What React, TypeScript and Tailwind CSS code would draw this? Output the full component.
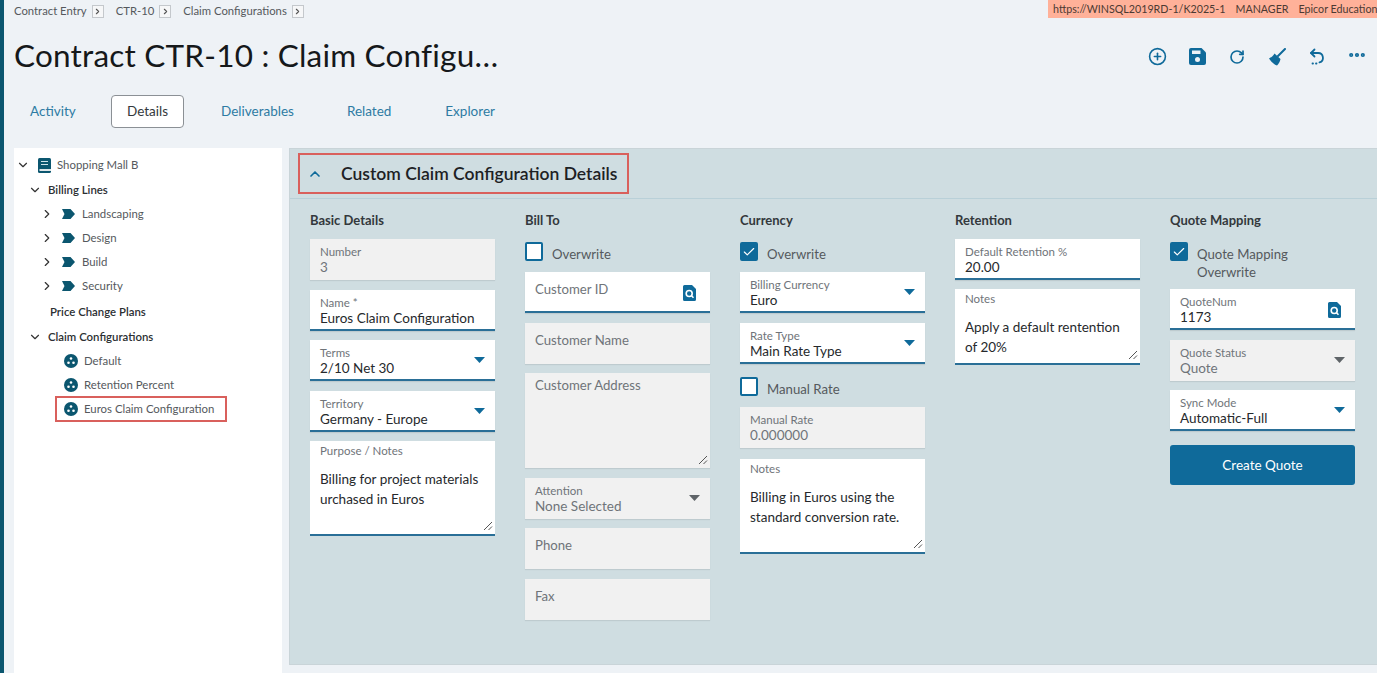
import { CirclePlus, RotateCw, Ellipsis, ChevronDown, ChevronRight, ChevronUp, Check } from "lucide-react"
import type { ReactNode } from "react"

const Caret = ({ muted }: { muted?: boolean }) => (
  <svg width="11" height="6" viewBox="0 0 11 6" className="absolute right-[10px] top-[17px]">
    <path d="M0 0h11L5.500 6z" fill={muted ? "#5f6468" : "#0f6a9a"} />
  </svg>
)

const Lookup = () => (
  <svg width="13" height="16" viewBox="0 0 13 16" className="absolute right-[14px] top-[13px]">
    <path d="M1.500 0H9l4 4v10.500a1.500 1.500 0 0 1-1.500 1.500h-10A1.500 1.500 0 0 1 0 14.500v-13A1.500 1.500 0 0 1 1.500 0z" fill="#0f6a9a" />
    <circle cx="6.200" cy="8.500" r="3" fill="none" stroke="#fff" strokeWidth="1.600" />
    <path d="M8.500 10.800l2 2" stroke="#fff" strokeWidth="1.600" />
  </svg>
)

const Grip = () => (
  <svg width="10" height="10" viewBox="0 0 10 10" className="absolute bottom-[3px] right-[2px]">
    <path d="M1 9l8-8M5.500 9l3.500-3.500" stroke="#555" strokeWidth="1" />
  </svg>
)

const SaveIcon = () => (
  <svg width="17" height="17" viewBox="0 0 17 17">
    <path d="M2 0h10.500L17 4.500V15a2 2 0 0 1-2 2H2a2 2 0 0 1-2-2V2a2 2 0 0 1 2-2z" fill="currentColor" />
    <rect x="3" y="2.500" width="8.500" height="3.500" fill="#eef2f6" />
    <circle cx="8.500" cy="11.500" r="2.500" fill="#eef2f6" />
  </svg>
)

const BroomIcon = () => (
  <svg width="18" height="18" viewBox="0 0 18 18">
    <path d="M17 1l-7 7" stroke="currentColor" strokeWidth="2" strokeLinecap="round" />
    <path d="M6.500 5.500L12.500 11C12 14 10.500 16 9 17.500 6 16.500 2.500 13 1 10.500 3 9.500 5 8 6.500 5.500z" fill="currentColor" />
  </svg>
)

const UndoIcon = () => (
  <svg width="18" height="18" viewBox="0 0 18 18" fill="none" stroke="currentColor" strokeWidth="1.800" strokeLinecap="round" strokeLinejoin="round">
    <path d="M6.500 1.500L3 5l3.500 3.500" />
    <path d="M3 5h7a4.800 4.800 0 0 1 1.500 9.400" />
    <path d="M8.500 15.500h-.5M5 15.500h-.5" />
  </svg>
)

const BookIcon = () => (
  <svg width="13" height="15" viewBox="0 0 13 15" className="ml-[8px] shrink-0">
    <rect x="0" y="0" width="13" height="15" rx="1.500" fill="#0b566f" />
    <path d="M3 3.500h7M3 6.500h7" stroke="#cfe3ea" strokeWidth="1.200" />
    <rect x="1.500" y="11" width="11.500" height="2" fill="#dfe6e9" />
  </svg>
)

type FieldProps = {
  label: string
  value?: string
  disabled?: boolean
  caret?: boolean
  lookup?: boolean
}

const Field = ({ label, value, disabled, caret, lookup }: FieldProps) => (
  <div
    className={`relative h-[41px] w-[185px] pl-[10px] pt-[5px] shadow-[0_1px_1px_rgba(0,0,0,0.08)] ${
      disabled ? "bg-[#f1f1f1]" : "border-b-2 border-[#2a6f97] bg-white"
    }`}
  >
    {value ? (
      <>
        <div className="text-[11.500px] leading-[15px] text-[#6f7479]">{label}</div>
        <div className={`text-[13.500px] leading-[17px] ${disabled ? "text-[#6f7479]" : "text-[#26292c]"}`}>{value}</div>
      </>
    ) : (
      <div className="pt-[3px] text-[13.200px] leading-[18px] text-[#6f7479]">{label}</div>
    )}
    {caret && <Caret muted={disabled} />}
    {lookup && <Lookup />}
  </div>
)

const Area = ({ label, lines, h, disabled, big }: { label: string; lines?: string[]; h: string; disabled?: boolean; big?: boolean }) => (
  <div
    className={`relative w-[185px] pl-[10px] ${h} ${
      disabled ? "bg-[#f1f1f1] pt-[3px] shadow-[0_1px_1px_rgba(0,0,0,0.08)]" : "border-b-2 border-[#2a6f97] bg-white pt-[2px]"
    }`}
  >
    <div className={big ? "text-[13.200px] leading-[18px] text-[#6f7479]" : "text-[11.500px] leading-[15px] text-[#6f7479]"}>{label}</div>
    {lines && (
      <div className="mt-[11px] text-[13.500px] leading-[20px] text-[#26292c]">
        {lines.map((l) => (
          <div key={l} className="whitespace-nowrap">{l}</div>
        ))}
      </div>
    )}
    <Grip />
  </div>
)

const Checkbox = ({ checked, label }: { checked?: boolean; label: ReactNode }) => (
  <div className="flex items-start gap-[9px] pt-[13px] text-[13.200px] leading-[18px] text-[#55595d]">
    <div
      className={`flex h-[19px] w-[18px] shrink-0 items-center justify-center rounded-[2px] border-2 border-[#0f6a9a] ${
        checked ? "bg-[#0f6a9a]" : "bg-white"
      }`}
    >
      {checked && <Check size={14} color="#fff" strokeWidth={2} />}
    </div>
    <div className="-mb-[2px] pt-[3px]">{label}</div>
  </div>
)

const Heading = ({ children }: { children: ReactNode }) => (
  <div className="h-[18px] text-[13px] font-bold leading-[18px] text-[#33383c]">{children}</div>
)

const Column = ({ title, children }: { title: string; children: ReactNode }) => (
  <div className="flex w-[185px] flex-col">
    <Heading>{title}</Heading>
    {children}
  </div>
)

const Crumb = ({ label }: { label: string }) => (
  <div className="flex items-center gap-[5px]">
    <span>{label}</span>
    <span className="flex h-[13px] w-[12px] items-center justify-center border border-[#c4c8cc] bg-[#f6f7f8]">
      <ChevronRight size={9} strokeWidth={3} color="#555" />
    </span>
  </div>
)

const Tag = () => (
  <svg width="13" height="10" viewBox="0 0 13 10" className="shrink-0">
    <path d="M0 0h8.500L13 5l-4.500 5H0l2.500-5z" fill="#0b566f" />
  </svg>
)

const Dots = () => (
  <svg width="14" height="14" viewBox="0 0 14 14" className="shrink-0">
    <circle cx="7" cy="7" r="7" fill="#0b566f" />
    <circle cx="7" cy="4.500" r="1.300" fill="#fff" />
    <circle cx="4.500" cy="8.800" r="1.300" fill="#fff" />
    <circle cx="9.500" cy="8.800" r="1.300" fill="#fff" />
  </svg>
)

const TreeRow = ({ children, className }: { children: ReactNode; className?: string }) => (
  <div className={`flex h-[24px] items-center whitespace-nowrap text-[11.400px] ${className ?? ""}`}>{children}</div>
)

const Tree = () => (
  <div className="h-full w-[268px] bg-white pl-[2px] pt-[5px] text-[#55595d]">
    <TreeRow>
      <ChevronDown size={14} color="#333" />
      <BookIcon />
      <span className="ml-[6px]">Shopping Mall B</span>
    </TreeRow>
    <TreeRow className="mt-[1px] pl-[12px] font-semibold text-[#2c3033]">
      <ChevronDown size={14} color="#333" />
      <span className="ml-[6px]">Billing Lines</span>
    </TreeRow>
    {["Landscaping", "Design", "Build", "Security"].map((n) => (
      <TreeRow key={n} className="pl-[24px]">
        <ChevronRight size={14} color="#333" />
        <span className="ml-[8px]"><Tag /></span>
        <span className="ml-[7px]">{n}</span>
      </TreeRow>
    ))}
    <TreeRow className="mt-[1px] h-[26px] pl-[34px] font-semibold text-[#2c3033]">Price Change Plans</TreeRow>
    <TreeRow className="pl-[12px] font-semibold text-[#2c3033]">
      <ChevronDown size={14} color="#333" />
      <span className="ml-[6px]">Claim Configurations</span>
    </TreeRow>
    {["Default", "Retention Percent"].map((n) => (
      <TreeRow key={n} className="pl-[48px]">
        <Dots />
        <span className="ml-[6px]">{n}</span>
      </TreeRow>
    ))}
    <TreeRow className="-mt-[1px] ml-[39px] h-[26px] w-[172px] border-2 border-[#d9605c] pl-[7px]">
      <Dots />
      <span className="ml-[6px]">Euros Claim Configuration</span>
    </TreeRow>
  </div>
)

const ToolIcon = ({ children }: { children: ReactNode }) => (
  <div className="flex w-[40px] items-center justify-center">{children}</div>
)

export default function App() {
  return (
    <div className="flex h-[673px] w-[1377px] overflow-hidden bg-[#eef2f6] font-['Lato','Noto_Sans',sans-serif]">
      <div className="w-[4px] shrink-0 bg-[#0b566f]" />
      <div className="flex min-w-0 flex-1 flex-col">
        <div className="flex h-[18px] justify-between">
          <div className="flex items-center gap-[12px] pl-[10px] pt-[4px] text-[11.300px] text-[#55595d]">
            <Crumb label="Contract Entry" />
            <Crumb label="CTR-10" />
            <Crumb label="Claim Configurations" />
          </div>
          <div className="flex w-[329px] items-center gap-[10px] whitespace-nowrap bg-[#ffb199] pl-[5px] text-[10.700px] text-[#4b3a33]">
            <span>https://WINSQL2019RD-1/K2025-1</span>
            <span>MANAGER</span>
            <span>Epicor Education</span>
          </div>
        </div>

        <div className="flex h-[77px] items-center justify-between pl-[10px]">
          <h1 className="pb-[3px] text-[31.500px] leading-[40px] tracking-[0.2px] text-[#15181a]">Contract CTR-10 : Claim Configu…</h1>
          <div className="flex items-center text-[#0f6a9a]">
            <ToolIcon><CirclePlus size={19} /></ToolIcon>
            <ToolIcon><SaveIcon /></ToolIcon>
            <ToolIcon><RotateCw size={16} strokeWidth={2.500} /></ToolIcon>
            <ToolIcon><BroomIcon /></ToolIcon>
            <ToolIcon><UndoIcon /></ToolIcon>
            <ToolIcon><Ellipsis size={20} strokeWidth={3} className="mb-[4px]" /></ToolIcon>
          </div>
        </div>

        <div className="flex h-[33px] items-center pl-[10px] text-[13.500px] text-[#2d7ba3]">
          <span className="w-[97px] pl-[16px]">Activity</span>
          <span className="flex h-[33px] w-[73px] items-center justify-center rounded-[4px] border border-[#8b9095] bg-white text-[#33383c]">Details</span>
          <span className="ml-[37px]">Deliverables</span>
          <span className="ml-[53px]">Related</span>
          <span className="ml-[54px]">Explorer</span>
        </div>

        <div className="flex min-h-0 flex-1 pl-[10px] pt-[20px]">
          <Tree />
          <div className="mb-[8px] ml-[7px] flex-1 border-b border-l border-t border-[#c9d4d8] bg-[#cfdde1]">
            <div className="flex h-[50px] items-center border-b border-[#b9d0d8] pl-[8px]">
              <div className="flex h-[41px] w-[331px] items-center border-2 border-[#d9605c] pl-[7px]">
                <ChevronUp size={16} color="#0f6a9a" strokeWidth={2.500} />
                <span className="ml-[18px] pt-[1px] text-[17.500px] font-semibold text-[#1d2124]">Custom Claim Configuration Details</span>
              </div>
            </div>
            <div className="flex gap-[30px] pl-[20px] pt-[12px]">
              <Column title="Basic Details">
                <div className="mt-[10px] flex flex-col gap-[9.500px]">
                  <Field label="Number" value="3" disabled />
                  <Field label="Name *" value="Euros Claim Configuration" />
                  <Field label="Terms" value="2/10 Net 30" caret />
                  <Field label="Territory" value="Germany - Europe" caret />
                  <Area label="Purpose / Notes" h="h-[95px]" lines={["Billing for project materials", "urchased in Euros"]} />
                </div>
              </Column>
              <Column title="Bill To">
                <Checkbox label="Overwrite" />
                <div className="mt-[11px] flex flex-col gap-[9.500px]">
                  <Field label="Customer ID" lookup />
                  <Field label="Customer Name" disabled />
                  <Area label="Customer Address" h="h-[95px]" disabled big />
                  <Field label="Attention" value="None Selected" disabled caret />
                  <Field label="Phone" disabled />
                  <Field label="Fax" disabled />
                </div>
              </Column>
              <Column title="Currency">
                <Checkbox checked label="Overwrite" />
                <div className="mt-[11px] flex flex-col gap-[9.500px]">
                  <Field label="Billing Currency" value="Euro" caret />
                  <Field label="Rate Type" value="Main Rate Type" caret />
                </div>
                <Checkbox label="Manual Rate" />
                <div className="mt-[11px] flex flex-col gap-[11px]">
                  <Field label="Manual Rate" value="0.000000" disabled />
                  <Area label="Notes" h="h-[95px]" lines={["Billing in Euros using the", "standard conversion rate."]} />
                </div>
              </Column>
              <Column title="Retention">
                <div className="mt-[10px] flex flex-col gap-[9px]">
                  <Field label="Default Retention %" value="20.00" />
                  <Area label="Notes" h="h-[76px]" lines={["Apply a default rentention", "of 20%"]} />
                </div>
              </Column>
              <Column title="Quote Mapping">
                <Checkbox checked label={<>Quote Mapping<br />Overwrite</>} />
                <div className="mt-[10px] flex flex-col gap-[9.500px]">
                  <Field label="QuoteNum" value="1173" lookup />
                  <Field label="Quote Status" value="Quote" disabled caret />
                  <Field label="Sync Mode" value="Automatic-Full" caret />
                </div>
                <div className="mt-[14px] flex h-[40px] items-center justify-center rounded-[3px] bg-[#0f6a9a] text-[13.500px] text-white">Create Quote</div>
              </Column>
            </div>
          </div>
        </div>
      </div>
    </div>
  )
}
